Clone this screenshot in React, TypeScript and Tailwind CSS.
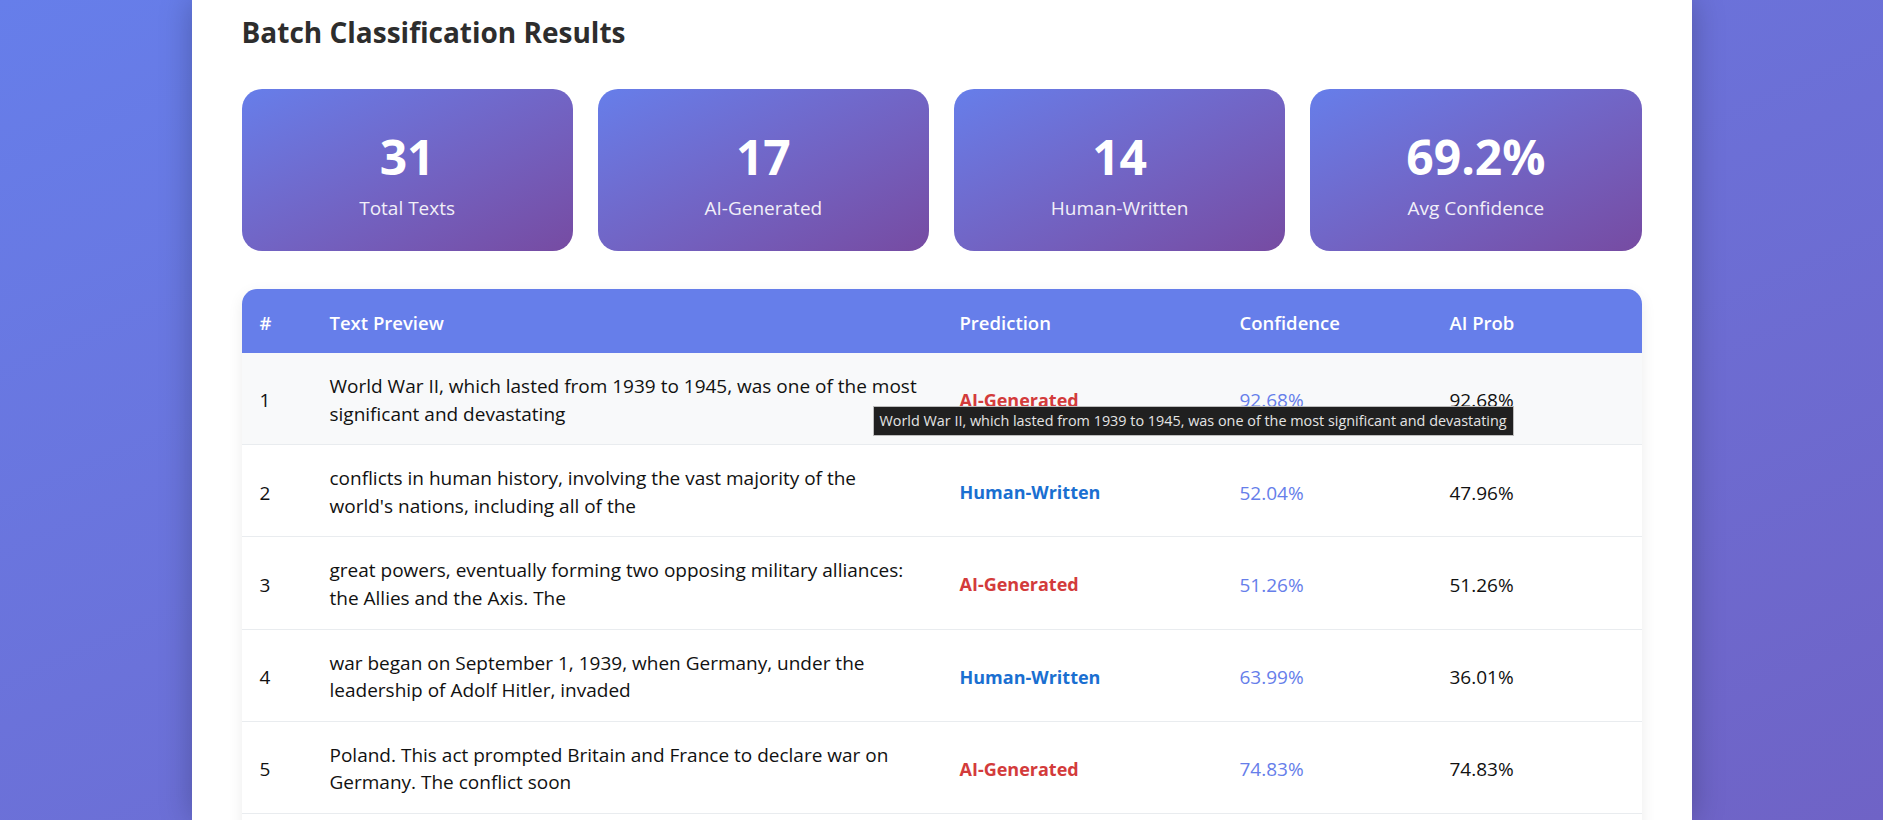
interface Row {
  id: number;
  lines: [string, string];
  prediction: "AI-Generated" | "Human-Written";
  confidence: string;
  aiProb: string;
}

const stats = [
  { value: "31", label: "Total Texts" },
  { value: "17", label: "AI-Generated" },
  { value: "14", label: "Human-Written" },
  { value: "69.2%", label: "Avg Confidence" },
];

const rows: Row[] = [
  { id: 1, lines: ["World War II, which lasted from 1939 to 1945, was one of the most", "significant and devastating"], prediction: "AI-Generated", confidence: "92.68%", aiProb: "92.68%" },
  { id: 2, lines: ["conflicts in human history, involving the vast majority of the", "world's nations, including all of the"], prediction: "Human-Written", confidence: "52.04%", aiProb: "47.96%" },
  { id: 3, lines: ["great powers, eventually forming two opposing military alliances:", "the Allies and the Axis. The"], prediction: "AI-Generated", confidence: "51.26%", aiProb: "51.26%" },
  { id: 4, lines: ["war began on September 1, 1939, when Germany, under the", "leadership of Adolf Hitler, invaded"], prediction: "Human-Written", confidence: "63.99%", aiProb: "36.01%" },
  { id: 5, lines: ["Poland. This act prompted Britain and France to declare war on", "Germany. The conflict soon"], prediction: "AI-Generated", confidence: "74.83%", aiProb: "74.83%" },
];

const cols = "grid grid-cols-[70px_630px_280px_210px_1fr]";

const StatCard = ({ value, label }: { value: string; label: string }) => (
  <div className="h-[162px] rounded-[20px] bg-gradient-to-br from-[#667eea] to-[#764ba2] text-white flex flex-col items-center justify-center pt-[8px]">
    <div className="text-[48px] font-bold leading-[58px]">{value}</div>
    <div className="text-[19px] leading-[26px] opacity-90 mt-[9px]">{label}</div>
  </div>
);

const ResultRow = ({ row }: { row: Row }) => (
  <div className={`${cols} items-center border-b border-[#e9ecef] text-[19px] text-[#111] pt-[2px] ${row.id === 1 ? "bg-[#f8f9fa]" : "bg-white"}`}>
    <div className="px-[18px] pt-[18px] pb-[16px]">{row.id}</div>
    <div className="px-[18px] pt-[18px] pb-[16px] leading-[27.6px] whitespace-nowrap">
      {row.lines[0]}
      <br />
      {row.lines[1]}
    </div>
    <div className={`px-[18px] pt-[18px] pb-[16px] text-[18px] font-bold ${row.prediction === "AI-Generated" ? "text-[#d33b3b]" : "text-[#1a6fd1]"}`}>{row.prediction}</div>
    <div className="px-[18px] pt-[18px] pb-[16px] font-medium text-[#667eea]">{row.confidence}</div>
    <div className="px-[18px] pt-[18px] pb-[16px]">{row.aiProb}</div>
  </div>
);

export default function App() {
  return (
    <div className="h-[820px] overflow-hidden bg-gradient-to-br from-[#667eea] to-[#6f63c6] font-['Segoe_UI','Open_Sans',sans-serif]">
      <div className="relative mx-auto w-[1500px] h-full bg-white shadow-[0_0_30px_rgba(0,0,0,0.25)] px-[50px] pt-[13px]">
        <h2 className="text-[28px] font-bold text-[#2d2d2d] leading-[38px]">Batch Classification Results</h2>

        <div className="grid grid-cols-4 gap-[25px] mt-[38px]">
          {stats.map((s) => (
            <StatCard key={s.label} value={s.value} label={s.label} />
          ))}
        </div>

        <div className="mt-[38px] rounded-[15px] overflow-hidden shadow-[0_5px_15px_rgba(0,0,0,0.08)]">
          <div className={`${cols} items-center h-[64px] pt-[3px] bg-[#667eea] text-white text-[18.5px] font-semibold`}>
            <div className="px-[18px]">#</div>
            <div className="px-[18px]">Text Preview</div>
            <div className="px-[18px]">Prediction</div>
            <div className="px-[18px]">Confidence</div>
            <div className="px-[18px]">AI Prob</div>
          </div>
          {rows.map((r) => (
            <ResultRow key={r.id} row={r} />
          ))}
          <div className="h-[40px] bg-white" />
        </div>

        <div className="absolute left-[681px] top-[406px] h-[30px] flex items-center px-[6px] bg-[#202020] border border-[#bdbdbd] text-[#e4e4e4] text-[14.4px] whitespace-nowrap">
          World War II, which lasted from 1939 to 1945, was one of the most significant and devastating
        </div>
      </div>
    </div>
  );
}
